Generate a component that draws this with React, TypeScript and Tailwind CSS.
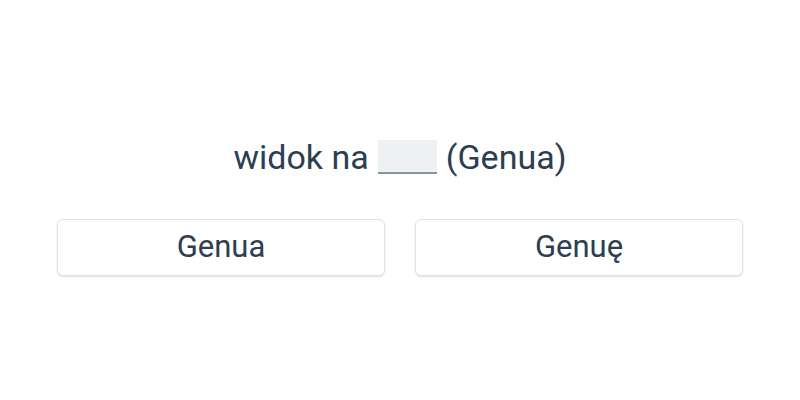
import React from 'react';

const options = ['Genua', 'Genuę'];

export default function App() {
    return (
        <div className="w-[800px] h-[400px] bg-white flex flex-col items-center pt-[137px] font-['Roboto',sans-serif] text-[#2c3e50]">
            {/* Sentence */}
            <div className="text-[34px] leading-[40px] h-[40px] flex items-center">
                <span>widok na</span>
                <span className="inline-block w-[59px] h-[34px] mx-[9px] bg-[#eef0f2] border-b-2 border-[#7f9a9e]" />
                <span>(Genua)</span>
            </div>

            {/* Answers */}
            <div className="grid grid-cols-2 gap-[30px] w-[686px] mt-[42px]">
                {options.map(o => (
                    <button
                        key={o}
                        className="h-[57px] bg-white border border-[#dfe2e5] rounded-md shadow-[0_1px_2px_rgba(0,0,0,0.12)] text-[31px] text-[#2c3e50]"
                    >
                        {o}
                    </button>
                ))}
            </div>
        </div>
    );
}
